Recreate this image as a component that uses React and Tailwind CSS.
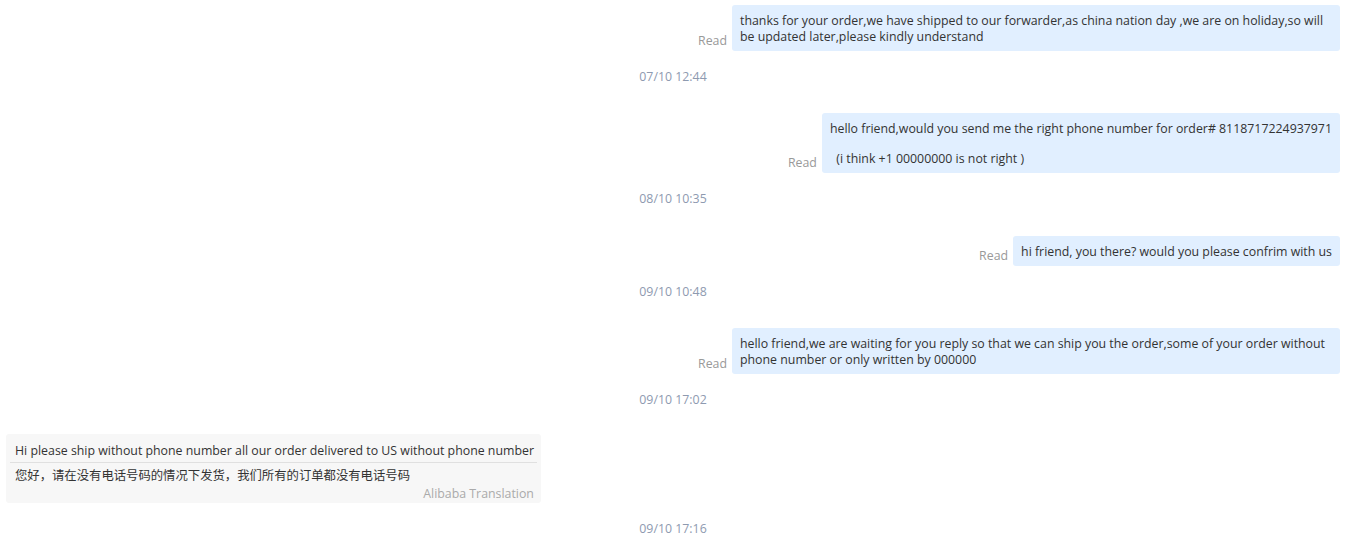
import React from "react";

const FONT = { fontFamily: '"Open Sans", "Noto Sans CJK SC", sans-serif' };

function Mine({ children, mt }) {
  return (
    <div className={`flex justify-end items-end gap-[5px] ${mt}`}>
      <span className="text-[#999] mb-[2px] leading-[16px] shrink-0">Read</span>
      <div className="max-w-[608px] bg-[#e1efff] rounded-[3px] px-2 pt-[8px] pb-[6px] text-[#333] leading-[16px] whitespace-pre-wrap">
        {children}
      </div>
    </div>
  );
}

function Stamp({ t }) {
  return <div className="mt-[18px] text-center text-[#8e9ab0] leading-[16px]">{t}</div>;
}

export default function App() {
  return (
    <div className="w-[1348px] min-h-[551px] bg-white pl-[6px] pr-[8px] pt-[5px] text-[12.35px]" style={FONT}>
      <Mine mt="">
        thanks for your order,we have shipped to our forwarder,as china nation day ,we are on holiday,so will be updated later,please kindly understand
      </Mine>
      <Stamp t="07/10 12:44" />
      <Mine mt="mt-[28px]">
        <div>hello friend,would you send me the right phone number for order# 8118717224937971</div>
        <div className="mt-[14px]">{"  (i think +1 00000000 is not right )"}</div>
      </Mine>
      <Stamp t="08/10 10:35" />
      <Mine mt="mt-[29px]">hi friend, you there? would you please confrim with us</Mine>
      <Stamp t="09/10 10:48" />
      <Mine mt="mt-[28px]">
        hello friend,we are waiting for you reply so that we can ship you the order,some of your order without phone number or only written by 000000
      </Mine>
      <Stamp t="09/10 17:02" />
      <div className="mt-[26px] flex justify-start">
        <div className="bg-[#f7f7f7] rounded-[3px] pl-[9px] pr-[7px] pt-[9px] pb-[1px] text-[#333] leading-[16px]">
          <div className="mb-[3px]">Hi please ship without phone number all our order delivered to US without phone number</div>
          <div className="-ml-[5px] -mr-[3px] border-t border-[#e0e0e0]" />
          <div className="mt-[5px]">您好，请在没有电话号码的情况下发货，我们所有的订单都没有电话号码</div>
          <div className="mt-[2px] text-right text-[#aaa]">Alibaba Translation</div>
        </div>
      </div>
      <Stamp t="09/10 17:16" />
    </div>
  );
}
